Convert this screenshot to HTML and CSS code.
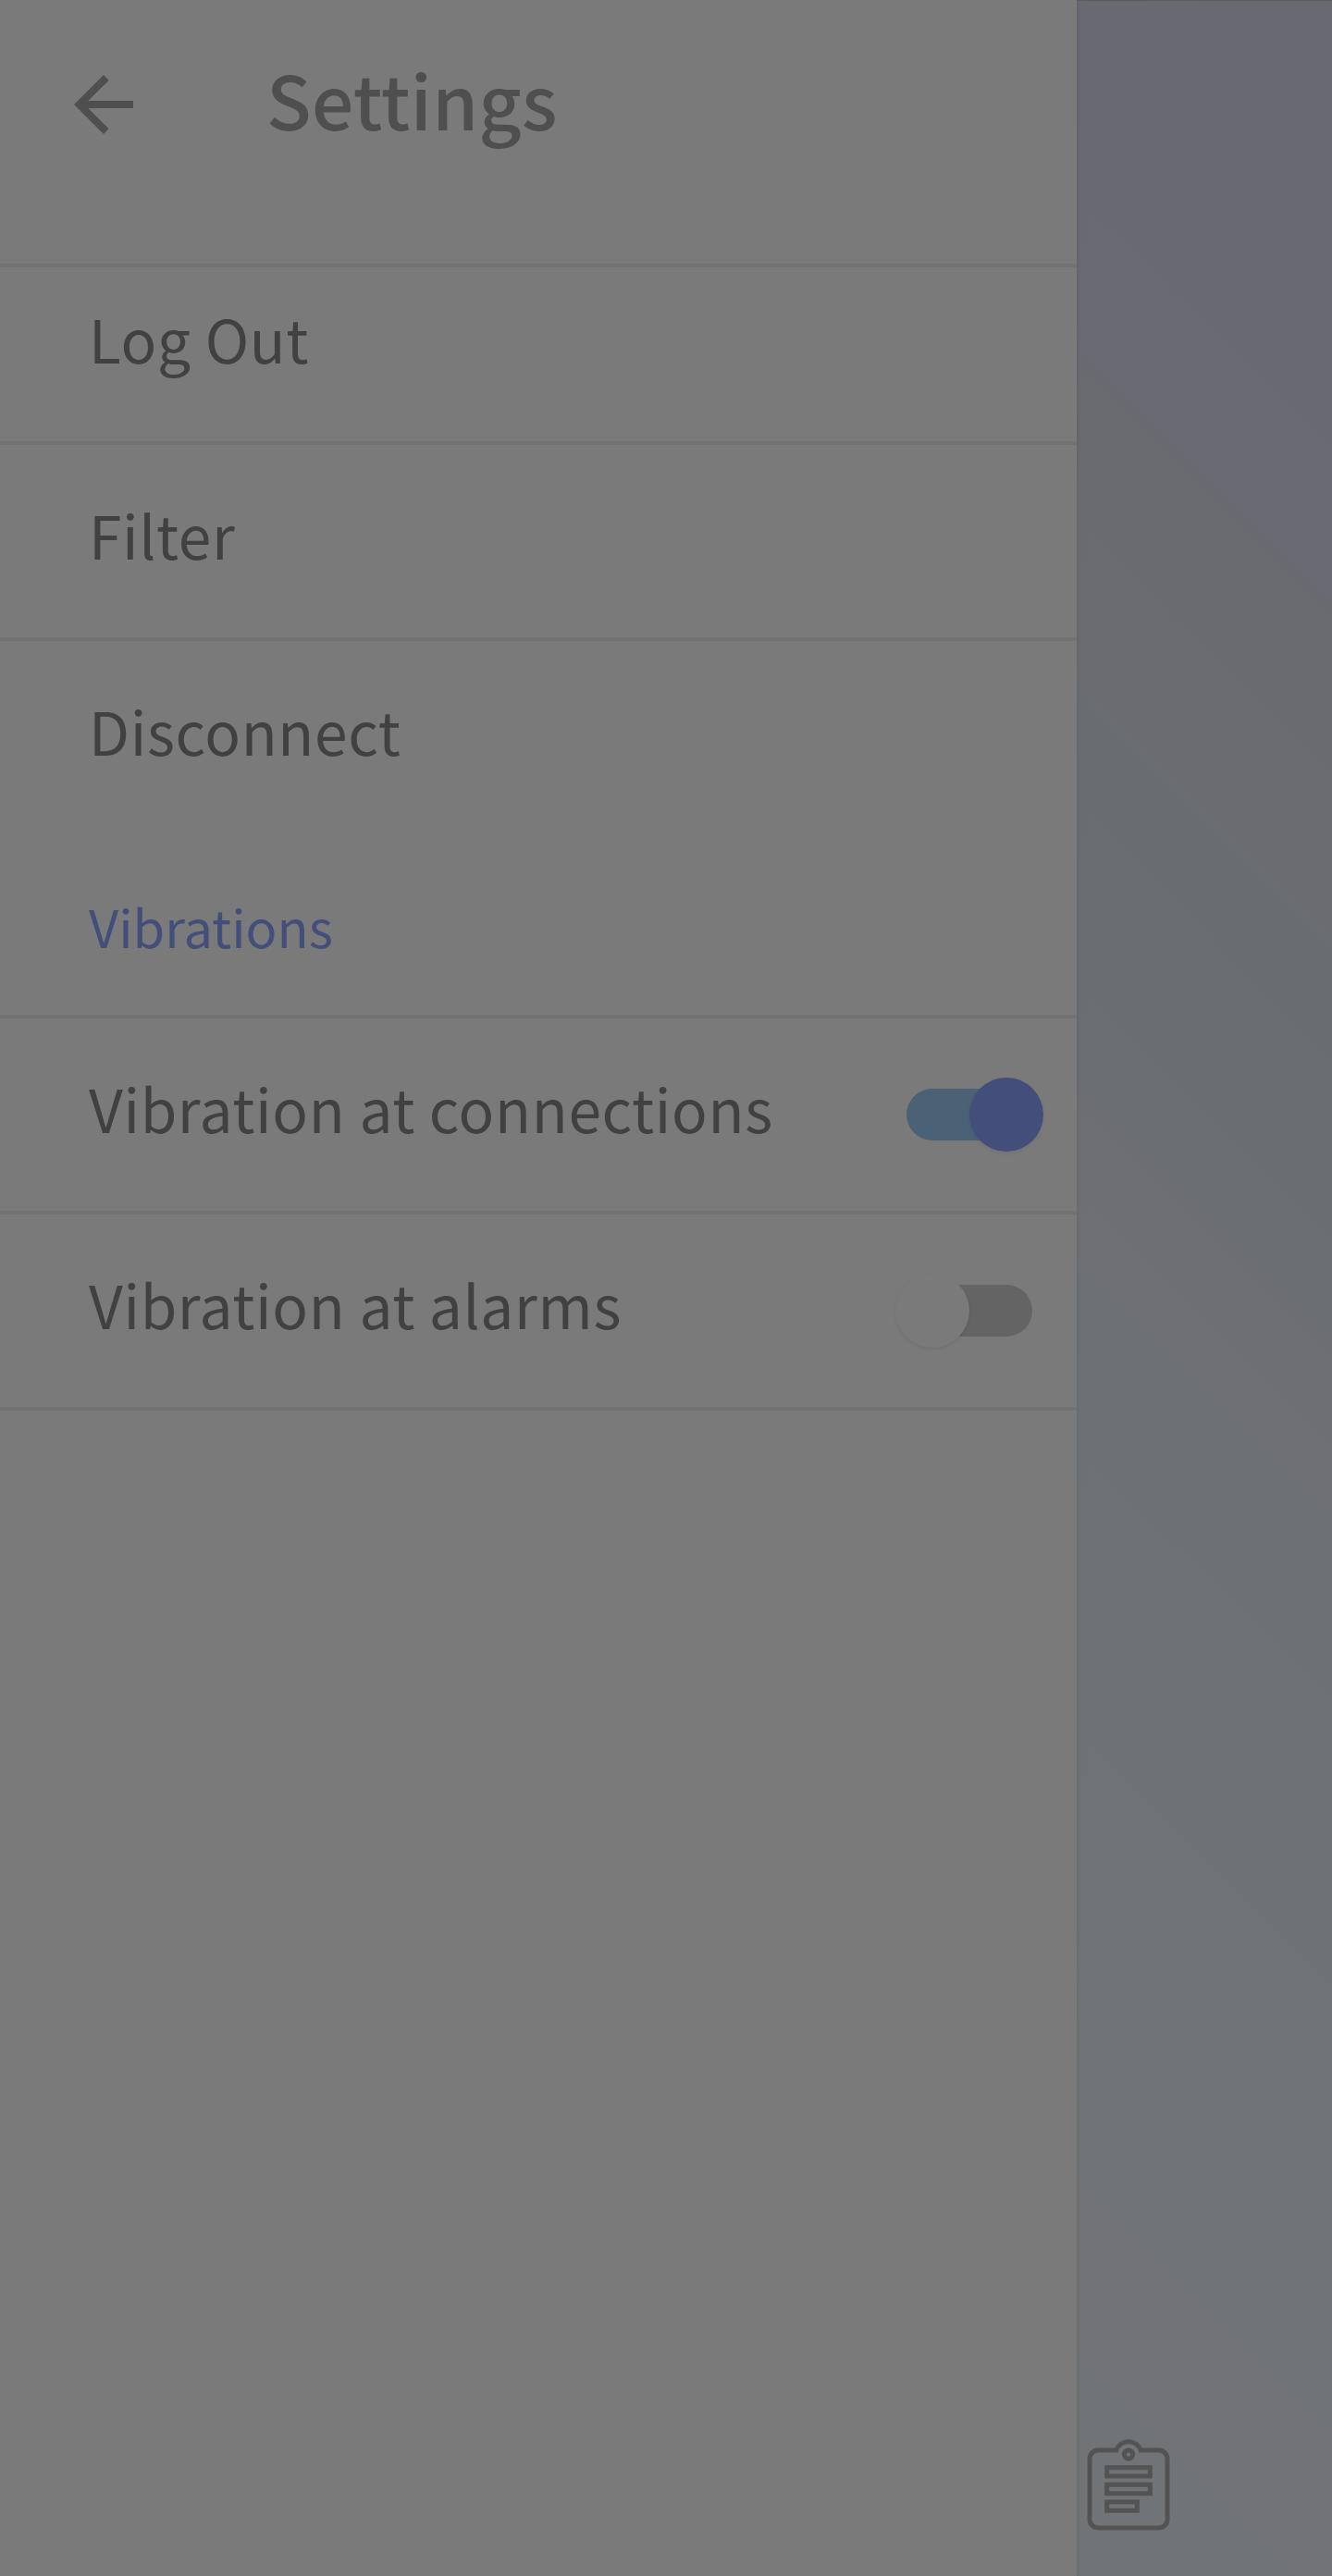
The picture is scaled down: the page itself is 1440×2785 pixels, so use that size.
FILE: index.html
```html
<!DOCTYPE html>
<html lang="en">
<head>
<meta charset="utf-8">
<title>Settings</title>
<link rel="stylesheet" href="styles.css">
</head>
<body>
<div class="screen">
  <aside class="drawer">
    <header class="header">
      <svg class="back" viewBox="0 0 24 24"><path d="M20 11H7.83l5.59-5.59L12 4l-8 8 8 8 1.41-1.41L7.83 13H20v-2z"/></svg>
      <h1 class="title">Settings</h1>
    </header>
    <div class="row row-first"><span class="label">Log Out</span></div>
    <div class="row"><span class="label">Filter</span></div>
    <div class="row row-plain"><span class="label">Disconnect</span></div>
    <h2 class="section">Vibrations</h2>
    <div class="row"><span class="label">Vibration at connections</span><span class="switch switch-on"><span class="thumb"></span></span></div>
    <div class="row"><span class="label">Vibration at alarms</span><span class="switch"><span class="thumb"></span></span></div>
  </aside>
  <main class="page">
    <svg class="clipboard" viewBox="0 0 24 24"><path d="M19 3h-4.18C14.4 1.84 13.3 1 12 1c-1.3 0-2.4.84-2.82 2H5c-1.1 0-2 .9-2 2v14c0 1.1.9 2 2 2h14c1.1 0 2-.9 2-2V5c0-1.1-.9-2-2-2zm-7 0c.55 0 1 .45 1 1s-.45 1-1 1-1-.45-1-1 .45-1 1-1zm2 14H7v-2h7v2zm3-4H7v-2h10v2zm0-4H7V7h10v2z"/></svg>
  </main>
</div>
</body>
</html>
```
FILE: styles.css
```css
* { box-sizing: border-box; }
body {
  margin: 0;
  font-family: "Noto Sans CJK SC", "Noto Sans CJK JP", sans-serif;
}
.screen {
  display: flex;
  width: 1440px;
  height: 2785px;
  overflow: hidden;
}
.drawer {
  width: 1164px;
  background: #7a7a7a;
}
.header {
  display: flex;
  align-items: center;
  height: 289px;
  padding: 0 64px 59px;
  border-bottom: 4px solid #727272;
}
.back {
  width: 96px;
  height: 96px;
  fill: #4f4f4f;
}
.title {
  margin: 0 0 0 128px;
  padding-bottom: 14px;
  font-size: 80px;
  line-height: 120px;
  font-weight: 500;
  letter-spacing: 0.3px;
  color: #4f4f4f;
}
.row {
  display: flex;
  align-items: center;
  justify-content: space-between;
  height: 212px;
  padding: 0 48px 0 96px;
  border-bottom: 4px solid #727272;
}
.row-first { height: 192px; padding-bottom: 20px; }
.row-plain { border-bottom-color: transparent; }
.label {
  padding-bottom: 16px;
  font-size: 64px;
  line-height: 96px;
  letter-spacing: 0.64px;
  color: #414141;
}
.section {
  display: flex;
  align-items: center;
  height: 196px;
  margin: 0;
  padding: 0 96px 1px;
  border-bottom: 4px solid #727272;
  font-size: 56px;
  font-weight: 400;
  color: #434f7a;
}
.switch {
  display: flex;
  align-items: center;
  width: 136px;
  height: 56px;
  border-radius: 28px;
  background: #646464;
}
.thumb {
  flex: none;
  width: 80px;
  height: 80px;
  margin-left: -12px;
  border-radius: 50%;
  background: #7a7a7a;
  box-shadow: 0 2px 4px rgba(0, 0, 0, 0.07);
}
.switch-on { background: #4b6175; }
.switch-on .thumb {
  margin-left: 68px;
  background: #434f7a;
}
.page {
  display: flex;
  align-items: flex-end;
  flex: 1;
  padding-bottom: 38px;
  border-top: 1px solid #5b5b60;
  background: linear-gradient(225deg, #686870 0%, #696a72 21%, #6a6b6f 22.5%, #6b6c70 32%, #696d71 34%, #6b6e72 47%, #6e6f73 49%, #6e7074 53%, #6c7175 55%, #6e7275 65%, #707476 85%, #727376 87%, #727376 91%, #707476 93%, #707477 100%);
  box-shadow: inset 3px 0 4px -2px rgba(0, 0, 0, 0.08);
}
.clipboard {
  width: 112px;
  height: 112px;
  fill: none;
  stroke: #535353;
  stroke-width: 1.07;
}
```
